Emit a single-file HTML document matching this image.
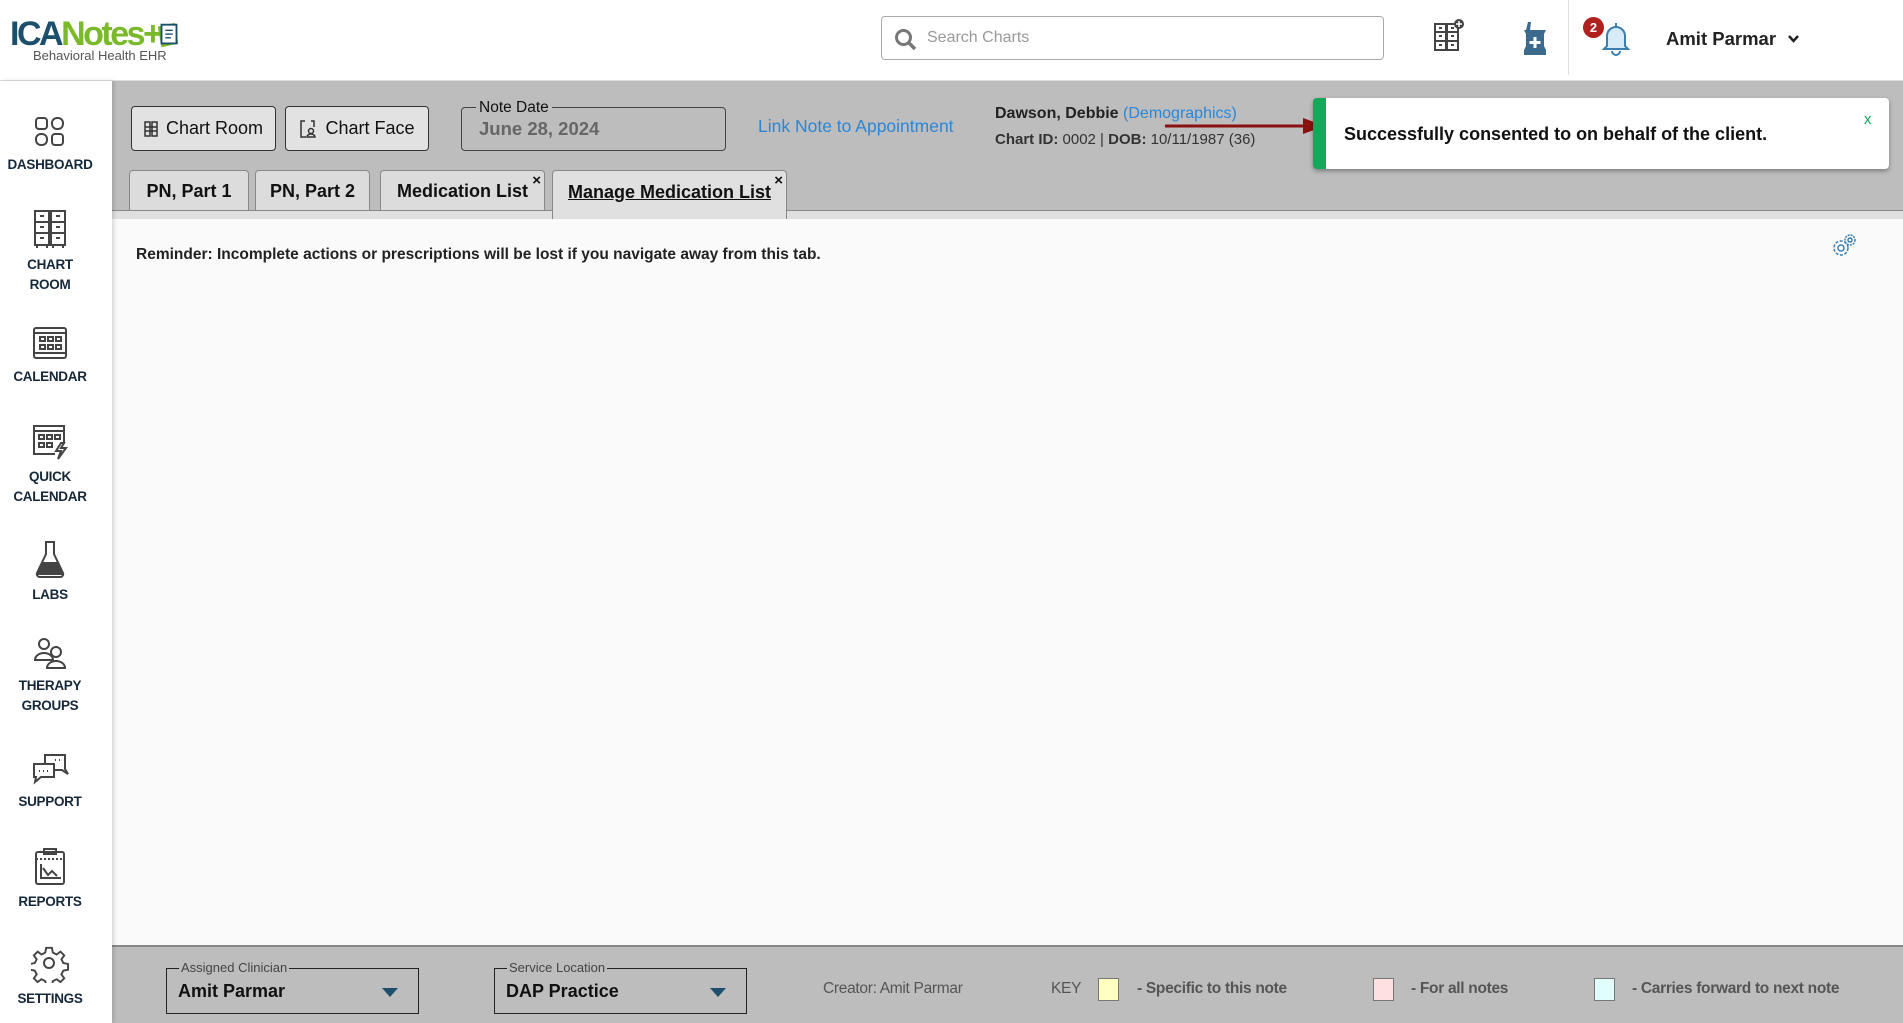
<!DOCTYPE html>
<html><head><meta charset="utf-8"><style>
*{box-sizing:border-box;margin:0;padding:0}
body{width:1903px;height:1023px;overflow:hidden;font-family:"Liberation Sans",sans-serif;background:#fafafa;position:relative;color:#222}
.abs{position:absolute}
#hdr{left:0;top:0;width:1903px;height:81px;background:#fff;border-bottom:1px solid #ddd}
#side{left:0;top:81px;width:112px;height:942px;background:#fff;box-shadow:2px 0 4px rgba(0,0,0,.15);z-index:2}
.nav{position:absolute;left:0;width:100px;text-align:center;font-size:13.5px;font-weight:bold;color:#15283a;line-height:20px;letter-spacing:-.3px}
.nav svg{display:block;margin:0 auto 6px}
#top{left:112px;top:81px;width:1791px;height:131px;background:#bdbdbd}
.btn{position:absolute;top:106px;height:45px;border:1px solid #333;border-radius:4px;background:#e2e2e2;font-size:18px;display:flex;align-items:center;justify-content:center;gap:8px;color:#111}
.tab{position:absolute;top:170px;height:42px;border:1px solid #888;border-bottom:none;border-radius:4px 4px 0 0;background:#dcdcdc;font-size:18px;font-weight:bold;display:flex;align-items:center;justify-content:center;color:#111}
.x{position:absolute;top:1px;right:3px;font-size:15px;font-weight:bold}
#foot{left:112px;top:945px;width:1791px;height:78px;background:#bdbdbd;border-top:2px solid #888}
.sel{position:absolute;top:968px;height:46px;border:1.5px solid #222;}
.sel .lab{position:absolute;top:-9px;left:12px;background:#bdbdbd;font-size:13px;color:#444;padding:0 2px}
.sel .v{position:absolute;left:11px;top:12px;font-size:18px;font-weight:bold;color:#111}
.sel .tri{position:absolute;right:20px;top:19px;width:0;height:0;border-left:8px solid transparent;border-right:8px solid transparent;border-top:9px solid #1f4e6e}
.ft{position:absolute;top:980px;font-size:15.5px;color:#555;font-weight:bold;letter-spacing:-.3px}
.sw{position:absolute;top:978px;width:21px;height:23px;border:1px solid #777}
</style></head><body>
<div id="hdr" class="abs"></div>
<!-- logo -->
<div class="abs" style="left:10px;top:14px;font-size:34px;font-weight:bold;letter-spacing:-2.5px;line-height:40px;white-space:nowrap"><span style="color:#1c4f6a">ICA</span><span style="color:#7ab929">Notes+</span></div>
<svg class="abs" style="left:154px;top:20px" width="30" height="30" viewBox="0 0 32 30"><path d="M4 6 L22 2 L26 24 L8 28 Z" fill="#7ab929"/><rect x="8" y="4" width="16" height="20" fill="#fff" stroke="#1c4f6a" stroke-width="2"/><path d="M12 10h8M12 14h8M12 18h6" stroke="#1c4f6a" stroke-width="1.5"/></svg>
<div class="abs" style="left:33px;top:48px;font-size:13px;color:#555">Behavioral Health EHR</div>
<!-- search -->
<div class="abs" style="left:881px;top:16px;width:503px;height:44px;border:1px solid #aaa;border-radius:4px;background:#fff"></div>
<svg class="abs" style="left:894px;top:28px" width="24" height="24" viewBox="0 0 24 24"><circle cx="9.5" cy="9.5" r="7" fill="none" stroke="#777" stroke-width="3"/><path d="M15 15l6 6" stroke="#777" stroke-width="3.5"/></svg>
<div class="abs" style="left:927px;top:29px;font-size:16px;color:#999">Search Charts</div>
<svg class="abs" style="left:1432px;top:18px" width="32" height="34" viewBox="0 0 32 34"><rect x="3" y="6" width="11" height="26" fill="none" stroke="#444" stroke-width="2"/><rect x="15" y="6" width="11" height="26" fill="none" stroke="#444" stroke-width="2"/><path d="M3 14h23M3 23h23M7 10h3M19 10h3M7 18h3M19 18h3M7 27h3M19 27h3" stroke="#444" stroke-width="2"/><circle cx="27" cy="6" r="5" fill="#444"/><path d="M27 3v6M24 6h6" stroke="#fff" stroke-width="1.5"/></svg>
<svg class="abs" style="left:1520px;top:20px" width="30" height="36" viewBox="0 0 30 36"><path d="M4 10h22l-2 4v12l2 4v5H4v-5l2-4V14z" fill="#3c6a8c"/><path d="M6 10l2-8h3l-1 8" fill="#3c6a8c"/><path d="M15 17v11M9.5 22.5h11" stroke="#fff" stroke-width="3"/></svg>
<div class="abs" style="left:1568px;top:0;width:1px;height:75px;background:#e0e0e0"></div>
<svg class="abs" style="left:1598px;top:20px" width="36" height="36" viewBox="0 0 36 36"><path d="M18 3v3M9 26V16a9 9 0 0 1 18 0v10l3 3H6z" fill="#d6ecf8" stroke="#3c7eb0" stroke-width="2"/><path d="M14 31a4 4 0 0 0 8 0" fill="none" stroke="#3c7eb0" stroke-width="2"/></svg>
<div class="abs" style="left:1583px;top:17px;width:21px;height:21px;border-radius:50%;background:#b0201f;color:#fff;font-size:13px;font-weight:bold;text-align:center;line-height:21px">2</div>
<div class="abs" style="left:1666px;top:28px;font-size:18.5px;font-weight:bold;color:#222">Amit Parmar</div>
<svg class="abs" style="left:1787px;top:34px" width="13" height="10" viewBox="0 0 13 10"><path d="M2 2l4.5 5 4.5-5" fill="none" stroke="#222" stroke-width="2.5"/></svg>

<!-- sidebar -->
<div id="side" class="abs">
<div class="nav" style="top:34px"><svg width="34" height="34" viewBox="0 0 34 34" fill="none" stroke="#444" stroke-width="2"><rect x="3" y="3" width="11" height="11" rx="3"/><rect x="19" y="3" width="11" height="11" rx="5"/><rect x="3" y="19" width="11" height="11" rx="5"/><rect x="19" y="19" width="11" height="11" rx="3"/></svg>DASHBOARD</div>
<div class="nav" style="top:128px"><svg width="36" height="40" viewBox="0 0 36 40" fill="none" stroke="#444" stroke-width="2"><rect x="3" y="2" width="14" height="34"/><rect x="19" y="2" width="14" height="34"/><path d="M3 13h30M3 24h30M8 7h4M24 7h4M8 18h4M24 18h4M8 29h4M24 29h4M5 36v3M15 36v3M21 36v3M31 36v3"/></svg>CHART<br>ROOM</div>
<div class="nav" style="top:244px"><svg width="38" height="36" viewBox="0 0 38 36" fill="none" stroke="#444" stroke-width="2"><rect x="3" y="3" width="32" height="30" rx="2"/><path d="M3 8h32M3 28h32"/><rect x="9" y="12" width="5" height="4"/><rect x="17" y="12" width="5" height="4"/><rect x="25" y="12" width="5" height="4"/><rect x="9" y="20" width="5" height="4"/><rect x="17" y="20" width="5" height="4"/><rect x="25" y="20" width="5" height="4"/></svg>CALENDAR</div>
<div class="nav" style="top:342px"><svg width="38" height="38" viewBox="0 0 38 38" fill="none" stroke="#444" stroke-width="2"><path d="M24 31H3V3h30v18"/><path d="M3 8h30"/><rect x="8" y="12" width="5" height="4"/><rect x="16" y="12" width="5" height="4"/><rect x="24" y="12" width="5" height="4"/><rect x="8" y="20" width="5" height="4"/><rect x="16" y="20" width="5" height="4"/><path d="M30 20l-5 8h5l-3 8 8-11h-5l3-5z"/></svg>QUICK<br>CALENDAR</div>
<div class="nav" style="top:458px"><svg width="34" height="40" viewBox="0 0 34 40" fill="none" stroke="#444" stroke-width="2"><path d="M12 3h10M13 3v12L4 34a3 3 0 0 0 3 4h20a3 3 0 0 0 3-4L21 15V3"/><path d="M9 24h16l4 11H5z" fill="#444"/></svg>LABS</div>
<div class="nav" style="top:555px"><svg width="36" height="34" viewBox="0 0 36 34" fill="none" stroke="#444" stroke-width="2"><circle cx="12" cy="8" r="5"/><path d="M3 24a9 7 0 0 1 18 0z"/><circle cx="24" cy="16" r="5"/><path d="M15 32a9 7 0 0 1 18 0z"/></svg>THERAPY<br>GROUPS</div>
<div class="nav" style="top:671px"><svg width="38" height="34" viewBox="0 0 38 34" fill="none" stroke="#444" stroke-width="2"><path d="M14 3h20v14l3 5-6-4H14z"/><path d="M3 12h20v13H10l-6 5 1-5H3z" fill="#fff"/><path d="M24 8h1M28 8h1M8 19h1M12 19h1M16 19h1"/></svg>SUPPORT</div>
<div class="nav" style="top:767px"><svg width="34" height="38" viewBox="0 0 34 38" fill="none" stroke="#444" stroke-width="2"><rect x="3" y="4" width="28" height="32" rx="2"/><rect x="11" y="1" width="12" height="5"/><path d="M3 11h28" stroke-dasharray="2 2"/><path d="M8 16v14h20M10 20l5 7 4-4 5 5"/></svg>REPORTS</div>
<div class="nav" style="top:864px"><svg width="38" height="38" viewBox="0 0 38 38" fill="none" stroke="#444" stroke-width="2"><path d="M16 3h6l1 5 4 2 4-3 4 4-3 4 2 4 5 1v6l-5 1-2 4 3 4-4 4-4-3-4 2-1 5h-6l-1-5-4-2-4 3-4-4 3-4-2-4-5-1v-6l5-1 2-4-3-4 4-4 4 3 4-2z" transform="scale(.95)"/><circle cx="18" cy="18" r="5"/></svg>SETTINGS</div>
</div>

<!-- top area -->
<div id="top" class="abs"></div>
<div class="btn" style="left:131px;width:145px"><svg width="14" height="16" viewBox="0 0 14 16"><rect x="1" y="1" width="5" height="14" fill="none" stroke="#333" stroke-width="1.5"/><rect x="8" y="1" width="5" height="14" fill="none" stroke="#333" stroke-width="1.5"/><path d="M1 6h12M1 10h12" stroke="#333" stroke-width="1.5"/></svg>Chart Room</div>
<div class="btn" style="left:285px;width:144px"><svg width="18" height="20" viewBox="0 0 18 20" fill="none" stroke="#333" stroke-width="1.5"><path d="M6 2H2v16h5M12 2h3v6"/><circle cx="12" cy="12" r="2.5"/><path d="M8 18a4 3 0 0 1 8 0z"/></svg>Chart Face</div>
<div class="abs" style="left:461px;top:107px;width:265px;height:44px;border:1px solid #444;border-radius:4px"></div>
<div class="abs" style="left:476px;top:99px;background:#bdbdbd;padding:0 3px;font-size:15.5px;color:#111">Note Date</div>
<div class="abs" style="left:479px;top:118px;font-size:18.5px;font-weight:bold;color:#666">June 28, 2024</div>
<div class="abs" style="left:758px;top:116px;font-size:17.5px;color:#2a86d8">Link Note to Appointment</div>
<div class="abs" style="left:995px;top:105px;font-size:16px;color:#222"><b style="font-weight:bold">Dawson, Debbie</b> <span style="color:#2a86d8">(Demographics)</span></div>
<div class="abs" style="left:995px;top:131px;font-size:15px;color:#333"><b>Chart ID:</b> 0002 | <b>DOB:</b> 10/11/1987 (36)</div>
<svg class="abs" style="left:1163px;top:117px" width="165" height="18" viewBox="0 0 165 18"><path d="M2 9h140" stroke="#8b1010" stroke-width="3"/><path d="M140 1l22 8-22 8z" fill="#8b1010"/></svg>
<div class="abs" style="left:1313px;top:98px;width:576px;height:71px;background:#fff;border-radius:4px;box-shadow:0 2px 5px rgba(0,0,0,.35);border-left:13px solid #14a85a"></div>
<div class="abs" style="left:1344px;top:124px;font-size:18px;font-weight:bold;color:#111">Successfully consented to on behalf of the client.</div>
<div class="abs" style="left:1864px;top:111px;font-size:15px;color:#14a85a">x</div>

<!-- tabs -->
<div class="tab" style="left:129px;width:120px">PN, Part 1</div>
<div class="tab" style="left:255px;width:115px">PN, Part 2</div>
<div class="tab" style="left:380px;width:165px">Medication List<span class="x">×</span></div>
<div class="tab" style="left:552px;width:235px;height:49px;background:#e0e0e0;z-index:1"><span style="text-decoration:underline;margin-top:-6px">Manage Medication List</span><span class="x">×</span></div>
<div class="abs" style="left:112px;top:210px;width:1791px;height:1px;background:#888"></div>
<div class="abs" style="left:112px;top:211px;width:1791px;height:8px;background:#e0e0e0"></div>
<div class="abs" style="left:136px;top:246px;font-size:15.5px;font-weight:bold;color:#222">Reminder: Incomplete actions or prescriptions will be lost if you navigate away from this tab.</div>
<svg class="abs" style="left:1830px;top:232px" width="28" height="28" viewBox="0 0 28 28" fill="none" stroke="#3c7eb0" stroke-width="1.5"><circle cx="11" cy="16" r="7" stroke-dasharray="3 1.5"/><circle cx="11" cy="16" r="3"/><circle cx="20" cy="8" r="5" stroke-dasharray="2 1"/><circle cx="20" cy="8" r="2"/></svg>

<!-- footer -->
<div id="foot" class="abs"></div>
<div class="sel" style="left:166px;width:253px"><span class="lab">Assigned Clinician</span><span class="v">Amit Parmar</span><span class="tri"></span></div>
<div class="sel" style="left:494px;width:253px"><span class="lab">Service Location</span><span class="v">DAP Practice</span><span class="tri"></span></div>
<div class="ft" style="left:823px;font-weight:normal">Creator: Amit Parmar</div>
<div class="ft" style="left:1051px;font-weight:normal">KEY</div>
<div class="sw" style="left:1098px;background:#ffffc0"></div>
<div class="ft" style="left:1137px">- Specific to this note</div>
<div class="sw" style="left:1373px;background:#ffe0e0"></div>
<div class="ft" style="left:1411px">- For all notes</div>
<div class="sw" style="left:1594px;background:#e0fffc"></div>
<div class="ft" style="left:1632px">- Carries forward to next note</div>
</body></html>
